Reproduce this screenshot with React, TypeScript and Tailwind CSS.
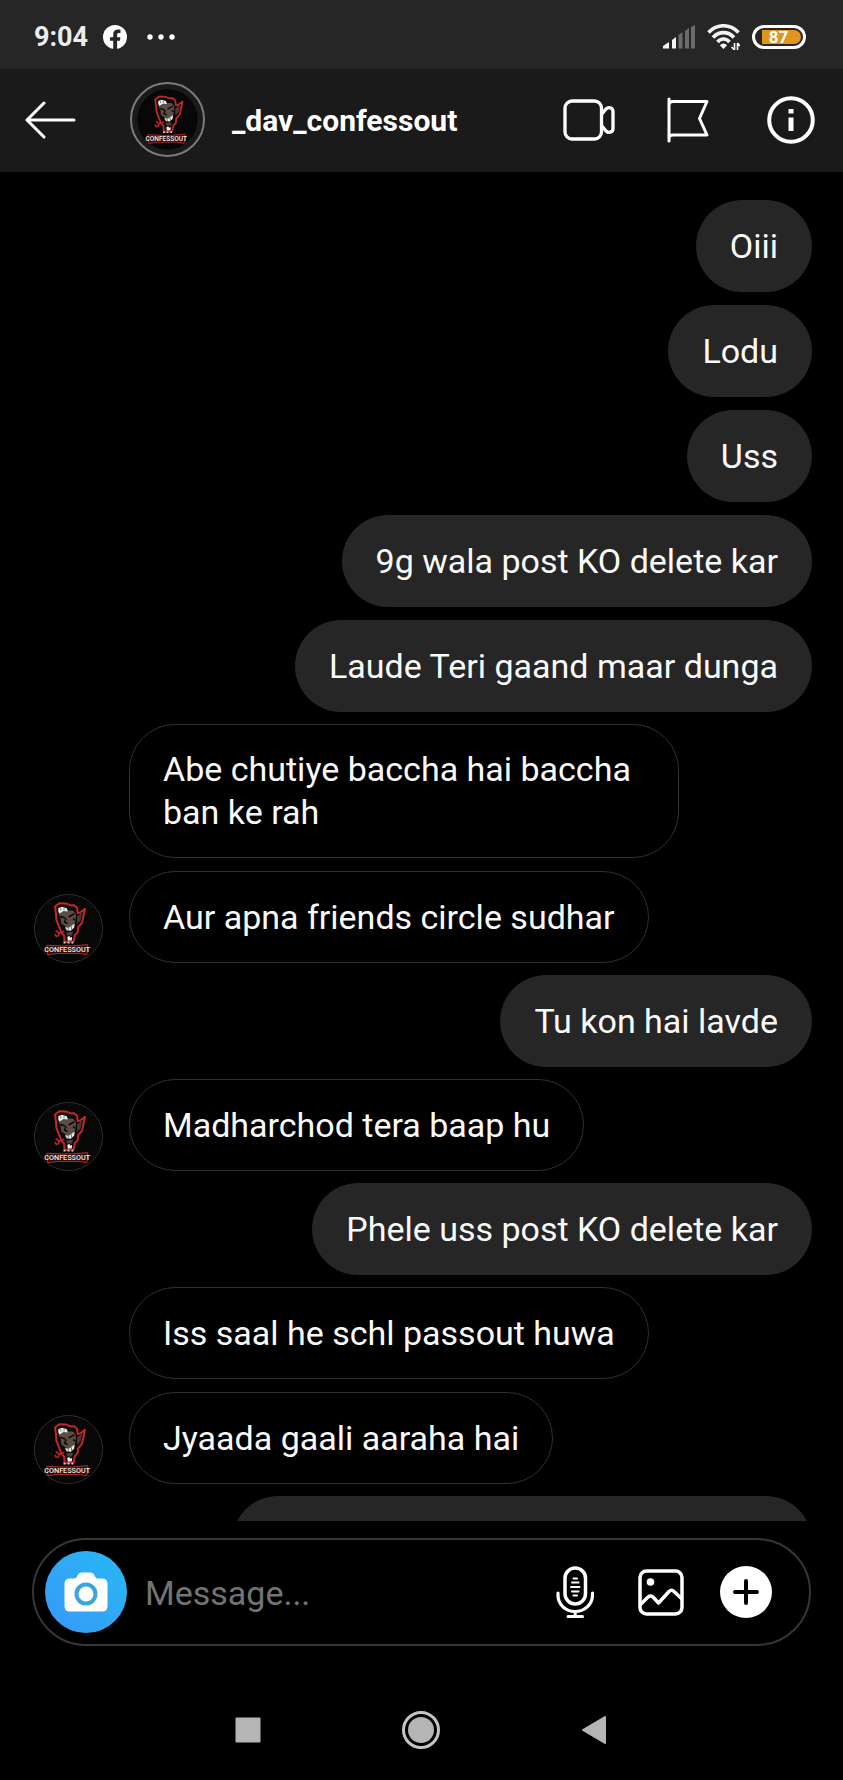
import type { ReactNode } from "react";

type Message = { from: "me" | "them"; text: string; avatar?: boolean; wide?: boolean };

const messages: Message[] = [
  { from: "me", text: "Oiii" },
  { from: "me", text: "Lodu" },
  { from: "me", text: "Uss" },
  { from: "me", text: "9g wala post KO delete kar" },
  { from: "me", text: "Laude Teri gaand maar dunga" },
  { from: "them", text: "Abe chutiye baccha hai baccha ban ke rah" },
  { from: "them", text: "Aur apna friends circle sudhar", avatar: true },
  { from: "me", text: "Tu kon hai lavde" },
  { from: "them", text: "Madharchod tera baap hu", avatar: true },
  { from: "me", text: "Phele uss post KO delete kar" },
  { from: "them", text: "Iss saal he schl passout huwa" },
  { from: "them", text: "Jyaada gaali aaraha hai", avatar: true },
  { from: "me", text: "", wide: true },
];

function MascotArt({ className }: { className: string }) {
  return (
    <svg viewBox="30 41 204 204" className={className} aria-hidden="true">
      <circle cx="132" cy="143" r="101" fill="#070707" />
      <path
        d="M94 98 L91 76 L104 66 L124 67 L137 72 L149 72 L158 80 L160 96 L168 94 L182 83 L177 108 L173 126 L161 140 L160 154 L151 164 L148 182 L120 184 L119 166 L110 154 L101 132 L95 116 Z"
        fill="#0b0909"
        stroke="#c3262b"
        strokeWidth="6"
        strokeLinejoin="round"
      />
      <path d="M101 96 L120 88 L146 88 L154 99 L154 118 L148 134 L140 142 L124 138 L110 128 L108 112 Z" fill="#5d4e45" />
      <path d="M158 106 L174 94 L169 118 L158 130 Z" fill="#4b3831" />
      <path d="M101 92 L101 81 L112 77 L127 81 L130 91 L117 90 L105 97 Z" fill="#e9eee9" />
      <path d="M108 80 L109 88 M119 79 L118 88" stroke="#7a8580" strokeWidth="3" />
      <path d="M107 106 L122 111 M132 108 L150 98 M125 112 L120 124 L130 128 M146 112 L153 118" stroke="#100c0b" strokeWidth="5" fill="none" />
      <path d="M121 139 L134 140 L151 128 L149 141 L139 150 L127 149 Z" fill="#e8e8e4" />
      <path d="M130 140 L132 149 M140 136 L142 147" stroke="#3b2b28" strokeWidth="2" />
      <path d="M125 155 L146 152 L143 164 L128 164 Z" fill="#4c4039" />
      <path d="M128 169 L134 166 L139 171 L143 168 L142 179 L130 180 Z" fill="#f1eeeb" />
      <path d="M93 149 L103 156 L102 165 L95 167 L90 160 M103 158 L119 151" stroke="#bb2429" strokeWidth="5" fill="none" />
      <path d="M117 186h6M129 186h6M141 186h6" stroke="#d9d5d3" strokeWidth="5" />
      <path d="M66 194 L112 196 L144 196 L191 192 L188 223 L165 219 L98 219 L69 223 Z" fill="#2c0d0e" stroke="#b12b2d" strokeWidth="3" />
      <text
        x="128"
        y="216"
        textAnchor="middle"
        fontFamily="Roboto, sans-serif"
        fontSize="22"
        fontWeight="500"
        fill="#f5ece8"
      >
        CONFESSOUT
      </text>
    </svg>
  );
}

function StatusBar() {
  return (
    <div className="flex h-[69px] shrink-0 items-center justify-between bg-[#262626] pr-[37px] pl-[34px] pt-[5px]">
      <div className="flex items-center">
        <span className="text-[27px] leading-8 font-bold text-[#ececec]">9:04</span>
        <svg viewBox="0 0 24 24" className="ml-[15px] size-6" aria-label="Facebook">
          <circle cx="12" cy="12" r="12" fill="#fff" />
          <path d="M10.2 24v-8.2H7v-3.6h3.2V9.5c0-3.1 1.9-4.9 4.8-4.9 1.3 0 2.5.2 2.5.2v3.100h-1.500c-1.500 0-1.900.9-1.900 1.900v2.400h3.300l-.5 3.600h-2.800V24z" fill="#262626" />
        </svg>
        <svg viewBox="0 0 28 6" className="ml-5 h-[6px] w-7" aria-hidden="true">
          <circle cx="3" cy="3" r="2.700" fill="#fff" />
          <circle cx="14" cy="3" r="2.700" fill="#fff" />
          <circle cx="25" cy="3" r="2.700" fill="#fff" />
        </svg>
      </div>
      <div className="flex items-center gap-3">
        <svg viewBox="0 0 32 24" className="h-6 w-8" aria-label="Signal strength">
          <path d="M0 23.500V21l6-4v6.500zM9 23.500V15l4-3v11.500z" fill="#f5f5f5" />
          <path d="M15.500 23.500V10l4-3v16.500zM22 23.500V6l4-3v20.500zM28 23.500V2l4-2v23.500z" fill="#6b6b6b" />
        </svg>
        <svg viewBox="0 0 33 26" className="h-[26px] w-[33px]" aria-label="Wi-Fi">
          <path d="M1.500 8.500C10-.5 23-.5 31.500 8.500M6 13.500c6-6.500 15-6.500 21 0M10.500 18c3.500-4 8.500-4 12 0" fill="none" stroke="#f2f2f2" strokeWidth="3.600" />
          <path d="M16.500 25l-3.600-3.800q3.600-3.400 7.200 0z" fill="#fff" />
          <path d="M27.500 19v7M24.500 23l3 3M30.500 26v-7M33 22l-2.500-3" stroke="#fff" strokeWidth="1.600" fill="none" />
        </svg>
        <div className="flex h-6 w-[54px] items-center rounded-full border-[3px] border-white py-[2px] pr-[2px] pl-[7px]">
          <span className="flex h-[14px] flex-1 items-center justify-center rounded-l-sm rounded-r-full bg-[#e0951f] pr-[6px] text-[17px] leading-4 font-bold text-white">
            87
          </span>
        </div>
      </div>
    </div>
  );
}

function IconButton({ label, children, className }: { label: string; children: ReactNode; className?: string }) {
  return (
    <button type="button" aria-label={label} className={className}>
      {children}
    </button>
  );
}

function Header() {
  return (
    <header className="flex h-[103px] shrink-0 items-center bg-[#1a1a1a] pr-7 pb-[2px] pl-[25px]">
      <IconButton label="Back">
        <svg viewBox="0 0 51 40" className="h-10 w-[51px]" fill="none" stroke="#fff" strokeWidth="3" strokeLinecap="round" strokeLinejoin="round">
          <path d="M49 20H2M19 3L2 20l17 17" />
        </svg>
      </IconButton>
      <div className="ml-[54px] flex size-[75px] shrink-0 items-center justify-center rounded-full border-2 border-[#7b7b7b]">
        <MascotArt className="size-[61px]" />
      </div>
      <h1 className="ml-[27px] flex-1 pt-[2px] text-[30px] leading-9 font-bold text-white">_dav_confessout</h1>
      <div className="flex items-center">
        <IconButton label="Video call">
          <svg viewBox="0 0 52 42" className="h-[42px] w-[52px]" fill="none" stroke="#fff" strokeWidth="3.300" strokeLinejoin="round">
            <rect x="2" y="2" width="36.500" height="38" rx="7" />
            <path d="M38.500 15.500l4.500-5.500c2.500-2.500 7-1.500 7 2.500v17c0 4-4.500 5-7 2.500l-4.500-5.500" />
          </svg>
        </IconButton>
        <IconButton label="Label conversation" className="ml-[52px]">
          <svg viewBox="0 0 42 46" className="h-[46px] w-[42px]" fill="none" stroke="#fff" strokeWidth="3" strokeLinecap="round" strokeLinejoin="round">
            <path d="M2 2v42M2 8q0-3.500 4-3.500h34L32.500 21.500 40 38H6q-4 0-4 3" />
          </svg>
        </IconButton>
        <IconButton label="Conversation details" className="ml-[58px]">
          <svg viewBox="0 0 48 48" className="size-12" fill="none" stroke="#fff">
            <circle cx="24" cy="24" r="21.800" strokeWidth="4" />
            <path d="M24 21.500V35M24 13v4.500" strokeWidth="5" />
          </svg>
        </IconButton>
      </div>
    </header>
  );
}

function MessageRow({ message, spacing }: { message: Message; spacing: string }) {
  if (message.from === "me") {
    return (
      <li className={`flex shrink-0 justify-end ${spacing}`}>
        <p
          className={`flex min-h-[92px] items-center rounded-[46px] bg-[#262626] px-[34px] py-6 ${
            message.wide ? "w-[580px]" : "max-w-[580px]"
          }`}
        >
          {message.text}
        </p>
      </li>
    );
  }
  return (
    <li className={`flex shrink-0 items-end ${spacing}`}>
      <div className="mr-[26px] w-[69px] shrink-0">
        {message.avatar && (
          <div className="size-[69px] rounded-full border border-[#333333]">
            <MascotArt className="size-full" />
          </div>
        )}
      </div>
      <p className="flex min-h-[92px] max-w-[550px] items-center rounded-[46px] border border-[#303030] px-[33px] py-[23px]">
        {message.text}
      </p>
    </li>
  );
}

function Composer() {
  return (
    <form
      className="mx-8 mt-[17px] flex h-[108px] shrink-0 items-center rounded-full border-2 border-[#363636] pr-[37px] pl-[11px]"
      onSubmit={(e) => e.preventDefault()}
    >
      <button
        type="button"
        aria-label="Open camera"
        className="flex size-[82px] shrink-0 items-center justify-center rounded-full bg-linear-to-tr from-[#3897f8] to-[#25b9f4]"
      >
        <svg viewBox="0 0 44 40" className="h-10 w-11">
          <path d="M6 6.500h4.500c1 0 1.700-.7 2.500-2C14 2 15.500.5 18 .5h8c2.500 0 4 1.500 5 4 .8 1.300 1.500 2 2.500 2H38q5.500 0 5.500 5.500v22q0 5.500-5.500 5.500H6Q.5 39.500.5 34V12Q.5 6.500 6 6.500z" fill="#fff" />
          <circle cx="22" cy="22" r="9.500" fill="#fff" stroke="#3ba5dd" strokeWidth="4" />
        </svg>
      </button>
      <input
        type="text"
        aria-label="Message"
        placeholder="Message..."
        className="ml-[18px] min-w-0 flex-1 bg-transparent pt-[2px] text-[34px] leading-[43px] text-white outline-none placeholder:text-[#737373]"
      />
      <IconButton label="Record voice message">
        <svg viewBox="0 0 38 52" className="h-[52px] w-[38px]" fill="none" stroke="#fff" strokeLinecap="round">
          <rect x="9" y="2" width="20.500" height="36" rx="10.200" strokeWidth="3.500" />
          <path d="M2 27v2c0 9.500 7.500 16.500 17 16.500S36.500 38.500 36.500 29v-2" strokeWidth="3.200" />
          <path d="M19.200 46v4M12 50.500h14.500" strokeWidth="3" />
          <path d="M17.500 12.500h3.500M16 16.500h6.500M15 21h8.500M16 25.500h6.500M17.500 29.500h3.500" strokeWidth="2" />
        </svg>
      </IconButton>
      <IconButton label="Choose photo" className="ml-11">
        <svg viewBox="0 0 46 47" className="h-[47px] w-[46px]" fill="none" stroke="#fff" strokeWidth="3.500">
          <rect x="2" y="2" width="42" height="43" rx="6.500" />
          <path d="M2 36l8-8q2.500-2 5 0l5.500 6L31 22.500q2.500-2.500 5 0l8 7.500" strokeLinejoin="round" />
          <circle cx="12.500" cy="13" r="3.800" fill="#fff" stroke="none" />
        </svg>
      </IconButton>
      <IconButton label="More options" className="ml-9">
        <svg viewBox="0 0 52 52" className="size-[52px]">
          <circle cx="26" cy="26" r="26" fill="#fff" />
          <path d="M26 15v22M15 26h22" stroke="#000" strokeWidth="4" strokeLinecap="round" />
        </svg>
      </IconButton>
    </form>
  );
}

function SystemNav() {
  return (
    <nav className="flex h-[134px] shrink-0 items-center justify-center gap-[141px] pt-[33px] pr-[2px]" aria-label="System navigation">
      <IconButton label="Recent apps">
        <svg viewBox="0 0 26 26" className="size-[26px]">
          <rect x="0.500" y="0.500" width="25" height="25" rx="1" fill="#b5b5b5" />
        </svg>
      </IconButton>
      <IconButton label="Home">
        <svg viewBox="0 0 38 38" className="size-[38px]">
          <circle cx="19" cy="19" r="17.500" fill="none" stroke="#c4c4c4" strokeWidth="3" />
          <circle cx="19" cy="19" r="13" fill="#b5b5b5" />
        </svg>
      </IconButton>
      <IconButton label="Go back">
        <svg viewBox="0 0 26 30" className="h-[30px] w-[26px]">
          <path d="M24 2v26L2 15z" fill="#b5b5b5" stroke="#b5b5b5" strokeWidth="2" strokeLinejoin="round" />
        </svg>
      </IconButton>
    </nav>
  );
}

export default function App() {
  return (
    <div className="flex h-screen flex-col overflow-hidden bg-black font-['Roboto',sans-serif]">
      <StatusBar />
      <Header />
      <main className="min-h-0 flex-1 overflow-hidden">
        <ul className="flex flex-col pt-7 pr-[31px] pl-[34px] text-[34px] leading-[43px] text-[#fafafa]">
          {messages.map((message, i) => (
            <MessageRow
              key={i}
              message={message}
              spacing={i === 0 ? "" : messages[i - 1].from === message.from ? "mt-[13px]" : "mt-3"}
            />
          ))}
        </ul>
      </main>
      <Composer />
      <SystemNav />
    </div>
  );
}
